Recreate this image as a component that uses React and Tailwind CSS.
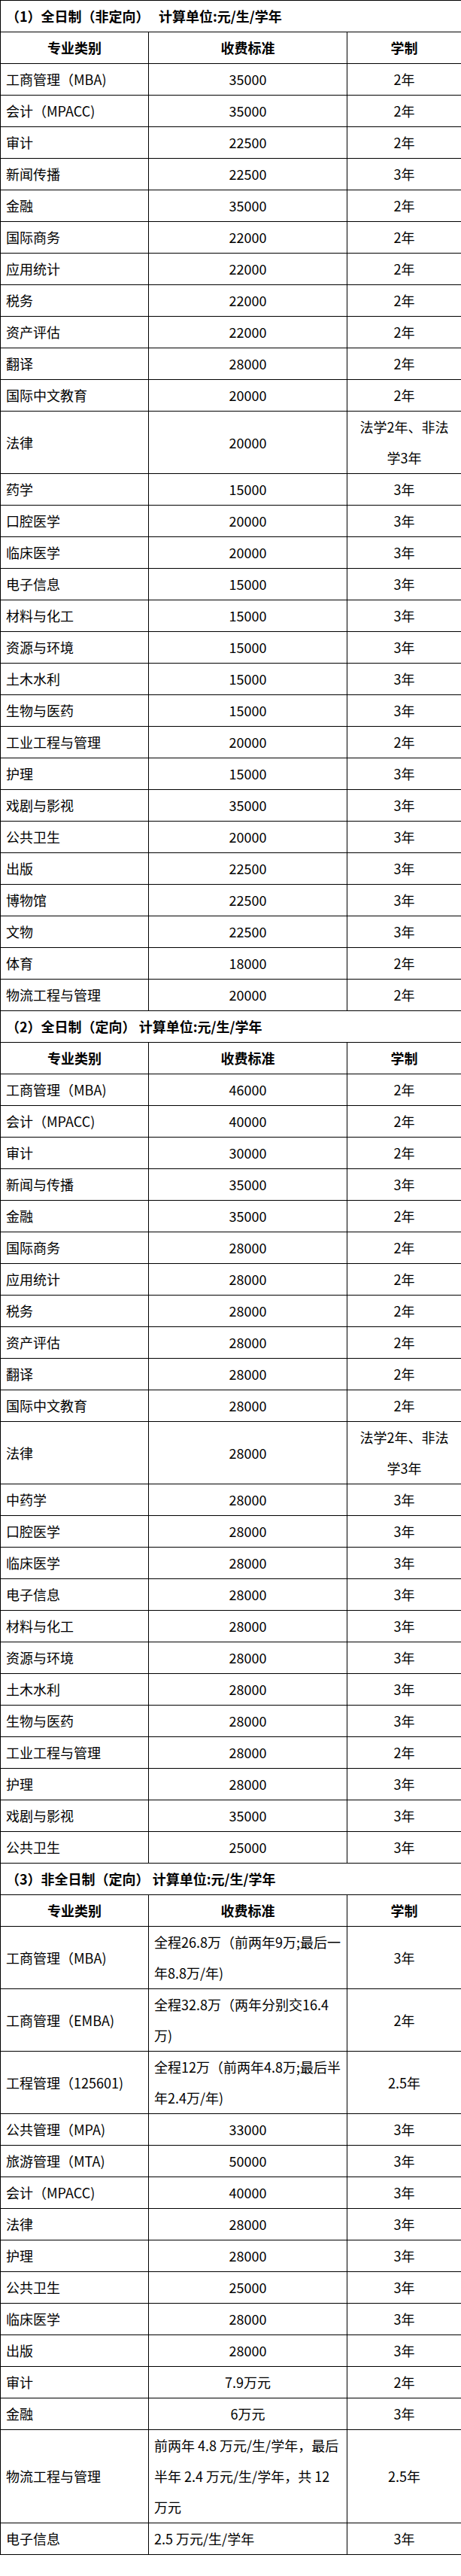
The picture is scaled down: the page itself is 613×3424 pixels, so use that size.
const sections = [
  {
    title: "（1）全日制（非定向）\u00a0\u00a0\u00a0计算单位:元/生/学年",
    rows: [
      ["工商管理（MBA)", "35000", "2年"],
      ["会计（MPACC)", "35000", "2年"],
      ["审计", "22500", "2年"],
      ["新闻传播", "22500", "3年"],
      ["金融", "35000", "2年"],
      ["国际商务", "22000", "2年"],
      ["应用统计", "22000", "2年"],
      ["税务", "22000", "2年"],
      ["资产评估", "22000", "2年"],
      ["翻译", "28000", "2年"],
      ["国际中文教育", "20000", "2年"],
      ["法律", "20000", ["法学2年、非法", "学3年"]],
      ["药学", "15000", "3年"],
      ["口腔医学", "20000", "3年"],
      ["临床医学", "20000", "3年"],
      ["电子信息", "15000", "3年"],
      ["材料与化工", "15000", "3年"],
      ["资源与环境", "15000", "3年"],
      ["土木水利", "15000", "3年"],
      ["生物与医药", "15000", "3年"],
      ["工业工程与管理", "20000", "2年"],
      ["护理", "15000", "3年"],
      ["戏剧与影视", "35000", "3年"],
      ["公共卫生", "20000", "3年"],
      ["出版", "22500", "3年"],
      ["博物馆", "22500", "3年"],
      ["文物", "22500", "3年"],
      ["体育", "18000", "2年"],
      ["物流工程与管理", "20000", "2年"],
    ],
  },
  {
    title: "（2）全日制（定向） 计算单位:元/生/学年",
    rows: [
      ["工商管理（MBA)", "46000", "2年"],
      ["会计（MPACC)", "40000", "2年"],
      ["审计", "30000", "2年"],
      ["新闻与传播", "35000", "3年"],
      ["金融", "35000", "2年"],
      ["国际商务", "28000", "2年"],
      ["应用统计", "28000", "2年"],
      ["税务", "28000", "2年"],
      ["资产评估", "28000", "2年"],
      ["翻译", "28000", "2年"],
      ["国际中文教育", "28000", "2年"],
      ["法律", "28000", ["法学2年、非法", "学3年"]],
      ["中药学", "28000", "3年"],
      ["口腔医学", "28000", "3年"],
      ["临床医学", "28000", "3年"],
      ["电子信息", "28000", "3年"],
      ["材料与化工", "28000", "3年"],
      ["资源与环境", "28000", "3年"],
      ["土木水利", "28000", "3年"],
      ["生物与医药", "28000", "3年"],
      ["工业工程与管理", "28000", "2年"],
      ["护理", "28000", "3年"],
      ["戏剧与影视", "35000", "3年"],
      ["公共卫生", "25000", "3年"],
    ],
  },
  {
    title: "（3）非全日制（定向） 计算单位:元/生/学年",
    rows: [
      ["工商管理（MBA)", ["全程26.8万（前两年9万;最后一", "年8.8万/年)"], "3年"],
      ["工商管理（EMBA)", ["全程32.8万（两年分别交16.4", "万)"], "2年"],
      ["工程管理（125601)", ["全程12万（前两年4.8万;最后半", "年2.4万/年)"], "2.5年"],
      ["公共管理（MPA)", "33000", "3年"],
      ["旅游管理（MTA)", "50000", "3年"],
      ["会计（MPACC)", "40000", "3年"],
      ["法律", "28000", "3年"],
      ["护理", "28000", "3年"],
      ["公共卫生", "25000", "3年"],
      ["临床医学", "28000", "3年"],
      ["出版", "28000", "3年"],
      ["审计", "7.9万元", "2年"],
      ["金融", "6万元", "3年"],
      [
        "物流工程与管理",
        ["前两年 4.8 万元/生/学年，最后", "半年 2.4 万元/生/学年，共 12", "万元"],
        "2.5年",
      ],
      ["电子信息", ["2.5 万元/生/学年"], "3年"],
    ],
  },
];

function Lines({ value }) {
  if (!Array.isArray(value)) return value;
  return value.map((line, i) => (
    <span key={i} className="block whitespace-nowrap">
      {line}
    </span>
  ));
}

const cell = "border border-black px-[7px] py-0 align-middle";

export default function App() {
  return (
    <div className="bg-white w-[613px] min-h-[3424px] text-black text-[18px] leading-[41px] font-['Noto_Sans_CJK_SC','Noto_Sans',sans-serif]">
      <table className="table-fixed border-collapse w-[613px]">
        <colgroup>
          <col className="w-[197px]" />
          <col className="w-[264px]" />
          <col className="w-[152px]" />
        </colgroup>
        <tbody>
          {sections.map((sec) => (
            <SectionRows key={sec.title} sec={sec} />
          ))}
        </tbody>
      </table>
    </div>
  );
}

function SectionRows({ sec }) {
  return (
    <>
      <tr>
        <td colSpan={3} className={`${cell} font-bold text-left whitespace-pre`}>
          {sec.title}
        </td>
      </tr>
      <tr>
        <td className={`${cell} font-bold text-center`}>专业类别</td>
        <td className={`${cell} font-bold text-center`}>收费标准</td>
        <td className={`${cell} font-bold text-center`}>学制</td>
      </tr>
      {sec.rows.map((r, i) => (
        <tr key={i}>
          <td className={`${cell} text-left whitespace-nowrap`}>{r[0]}</td>
          <td className={`${cell} ${Array.isArray(r[1]) ? "text-left" : "text-center"}`}>
            <Lines value={r[1]} />
          </td>
          <td className={`${cell} text-center`}>
            <Lines value={r[2]} />
          </td>
        </tr>
      ))}
    </>
  );
}
